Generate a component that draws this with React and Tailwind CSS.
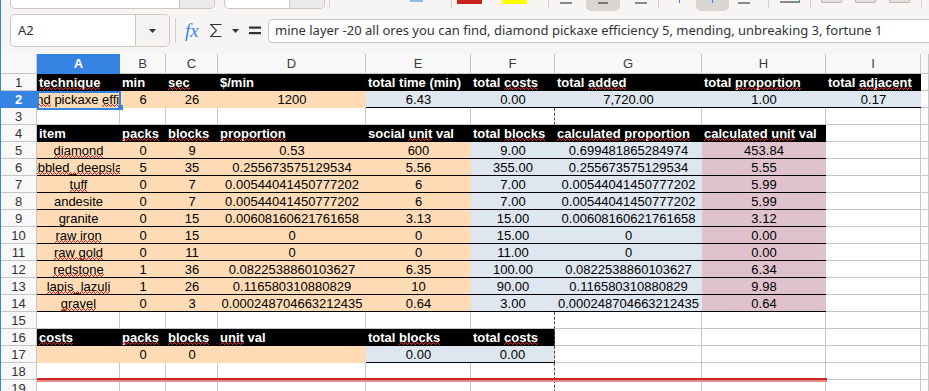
import React from "react";

const GRID = "grid grid-cols-[36px_83px_46px_52px_148px_105px_84px_147px_124px_95px_1fr]";

const K = (t, x = {}) => ({ t, bg: "k", ...x });
const O = (t, x = {}) => ({ t, bg: "o", ...x });
const B = (t, x = {}) => ({ t, bg: "b", ...x });
const P = (t, x = {}) => ({ t, bg: "p", ...x });
const W = (x = {}) => ({ t: "", ...x });
const bb = { bb: true };
const blank = () => [W(), W(), W(), W(), W(), W({ dash: true }), W(), W(), W(), W()];

const A2 = "mine layer -20 all ores you can find, {diamond} pickaxe {efficiency} 5, mending, unbreaking 3, fortune 1";

const items = [
  ["{diamond}", "0", "9", "0.53", "600", "9.00", "0.699481865284974", "453.84"],
  ["{cobbled_deepslate}", "5", "35", "0.255673575129534", "5.56", "355.00", "0.255673575129534", "5.55"],
  ["{tuff}", "0", "7", "0.00544041450777202", "6", "7.00", "0.00544041450777202", "5.99"],
  ["andesite", "0", "7", "0.00544041450777202", "6", "7.00", "0.00544041450777202", "5.99"],
  ["granite", "0", "15", "0.00608160621761658", "3.13", "15.00", "0.00608160621761658", "3.12"],
  ["{raw iron}", "0", "15", "0", "0", "15.00", "0", "0.00"],
  ["{raw gold}", "0", "11", "0", "0", "11.00", "0", "0.00"],
  ["{redstone}", "1", "36", "0.0822538860103627", "6.35", "100.00", "0.0822538860103627", "6.34"],
  ["{lapis_lazuli}", "1", "26", "0.116580310880829", "10", "90.00", "0.116580310880829", "9.98"],
  ["{gravel}", "0", "3", "0.000248704663212435", "0.64", "3.00", "0.000248704663212435", "0.64"],
];

const rows = [
  [K("{technique}"), K("min"), K("{sec}"), K("$/min"), K("total time (min)"), K("total {costs}"), K("total {added}"), K("total {proportion}"), K("total {adjacent}"), W()],
  [O(A2), O("6"), O("26"), O("1200"), B("6.43", bb), B("0.00", bb), B("7,720.00", bb), B("1.00", bb), B("0.17", bb), W()],
  blank(),
  [K("item"), K("{packs}"), K("{blocks}"), K("{proportion}"), K("social {unit} val"), K("total {blocks}"), K("{calculated} {proportion}"), K("{calculated} {unit} val"), W(), W()],
  ...items.map((r) => [O(r[0], bb), O(r[1], bb), O(r[2], bb), O(r[3], bb), O(r[4], bb), B(r[5], bb), B(r[6], bb), P(r[7], bb), W(), W()]),
  blank(),
  [K("{costs}"), K("{packs}"), K("{blocks}"), K("{unit} val"), K("total {blocks}"), K("total {costs}", { dash: true }), W(), W(), W(), W()],
  [O(""), O("0"), O("0"), O(""), B("0.00", bb), B("0.00", { bb: true, dash: true }), W(), W(), W(), W()],
  blank(),
  blank(),
];

// spell-check squiggle under a word (stacked in one grid cell, no positioning)
function Squiggle({ children }) {
  return (
    <span className="inline-grid">
      <span className="[grid-area:1/1]">{children}</span>
      <svg className="[grid-area:1/1] self-end mb-[1px] w-0 min-w-full h-[3px]" shapeRendering="crispEdges">
        <rect width="100%" height="3" fill="url(#sq)" />
      </svg>
    </span>
  );
}

function Txt({ s }) {
  return s.split(/(\{[^}]*\})/).map((p, i) =>
    p.startsWith("{") ? <Squiggle key={i}>{p.slice(1, -1)}</Squiggle> : p
  );
}

function Cell({ c }) {
  const bg =
    c.bg === "k" ? "bg-black text-white font-bold" :
    c.bg === "o" ? "bg-[#ffdbb6]" :
    c.bg === "b" ? "bg-[#dee6ef]" :
    c.bg === "p" ? "bg-[#e0c2cd]" : "bg-white";
  const right = c.dash
    ? "border-r border-r-[#4d4d4d] [border-right-style:dashed]"
    : c.bg ? "" : "border-r border-r-[#c6c6c6]";
  const bottom = c.bb ? "border-b border-b-black" : c.bg ? "" : "border-b border-b-[#c6c6c6]";
  const al = c.bg === "k" ? "justify-start pl-[2px]" : "justify-center";
  return (
    <div className={`flex h-[17px] overflow-hidden whitespace-nowrap leading-[17px] ${al} ${bg} ${right} ${bottom}`}>
      <span className="shrink-0"><Txt s={c.t} /></span>
    </div>
  );
}

const Sep = ({ ml, h = "h-[8px]" }) => <div className={`shrink-0 w-px ${h} bg-[#d5d0cc] ${ml}`} />;
const Dash = ({ ml }) => <div className={`shrink-0 w-[12px] h-[2px] mt-[2px] bg-[#8a8a8a] ${ml}`} />;
const Tri = ({ ml = "" }) => (
  <svg className={`shrink-0 ${ml}`} width="7" height="4" viewBox="0 0 7 4"><path d="M0 0h7L3.5 4z" fill="#2e3436" /></svg>
);

function Toolbar() {
  return (
    <div className="flex items-start h-[11px]">
      <div className="shrink-0 ml-[9px] w-[205px] h-[9px] flex rounded-b-[5px] border border-t-0 border-[#cdc7c2] bg-white overflow-hidden">
        <div className="ml-auto w-[35px] border-l border-[#cdc7c2] bg-[#edebe9]" />
      </div>
      <div className="shrink-0 ml-[9px] w-[101px] h-[9px] flex rounded-b-[5px] border border-t-0 border-[#cdc7c2] bg-white overflow-hidden">
        <div className="ml-auto w-[35px] border-l border-[#cdc7c2] bg-[#edebe9]" />
      </div>
      <Sep ml="ml-[4px]" />
      <div className="shrink-0 ml-[80px] w-[13px] h-[2px] bg-[#8fbbe8]" />
      <Sep ml="ml-[28px]" />
      <div className="shrink-0 ml-[5px] w-[25px] h-[4px] bg-[#c9211e]" />
      <div className="shrink-0 ml-[20px] w-[25px] h-[4px] bg-[#ffff00]" />
      <Sep ml="ml-[21px]" />
      <Dash ml="ml-[11px]" />
      <div className="shrink-0 ml-[14px] w-[34px] h-[11px] rounded-b-[5px] bg-[#d9d5d1] flex justify-center">
        <div className="w-[10px] h-[2px] mt-[2px] bg-[#777]" />
      </div>
      <Dash ml="ml-[15px]" />
      <Sep ml="ml-[11px]" />
      <div className="shrink-0 ml-[20px] w-px h-[3px] bg-[#3584e4]" />
      <div className="shrink-0 ml-[16px] w-[33px] h-[11px] rounded-b-[5px] bg-[#d9d5d1] flex justify-center">
        <div className="w-px h-[3px] bg-[#3584e4]" />
      </div>
      <Dash ml="ml-[9px]" />
      <Sep ml="ml-[18px]" />
      <div className="shrink-0 ml-[11px] w-[20px] h-[2px] mt-[1px] flex bg-[#8a8a8a]">
        <div className="ml-auto w-px h-[3px] -mt-[1px] bg-[#3584e4]" />
      </div>
      <Sep ml="ml-[10px]" />
      <div className="shrink-0 ml-[10px] w-[21px] h-[3px] rounded-b-[2px] border border-t-0 border-[#b8b4b0] bg-[#e4e1de]" />
      <div className="shrink-0 ml-[13px] w-[21px] h-[3px] rounded-b-[2px] border border-t-0 border-[#b8b4b0] bg-[#e4e1de]" />
      <div className="shrink-0 ml-[13px] w-[21px] h-[3px] rounded-b-[2px] border border-t-0 border-[#b8b4b0] bg-[#e4e1de]" />
      <Sep ml="ml-[11px]" />
    </div>
  );
}

function FormulaBar() {
  return (
    <div className="flex items-center h-[33px] mt-[3px] text-[13px] text-[#2e3436] font-['Noto_Sans',sans-serif] overflow-hidden">
      <div className="shrink-0 ml-[9px] w-[160px] h-[33px] flex rounded-[5px] border border-[#cdc7c2] bg-white overflow-hidden">
        <div className="flex-1 flex items-center pl-[7px]">A2</div>
        <div className="w-[34px] border-l border-[#cdc7c2] bg-[#f4f3f2] flex items-center justify-center">
          <Tri />
        </div>
      </div>
      <Sep ml="ml-[5px]" h="h-[25px]" />
      <div className="shrink-0 ml-[9px] w-[15px] text-[19px] leading-none italic text-[#3584e4] font-['Liberation_Serif',serif]">fx</div>
      <svg className="shrink-0 ml-[9px]" width="14" height="15" viewBox="0 0 14 15">
        <path d="M12.5 1.5H1.8l5.6 6L1.8 13.5h10.7" fill="none" stroke="#2e3436" strokeWidth="1.1" />
      </svg>
      <Tri ml="ml-[9px]" />
      <svg className="shrink-0 ml-[10px]" width="12" height="9" viewBox="0 0 12 9">
        <rect x="0" y="0.5" width="12" height="2.2" fill="#2e3436" />
        <rect x="0" y="6" width="12" height="2.2" fill="#2e3436" />
      </svg>
      <div className="shrink-0 ml-[7px] w-[700px] h-[24px] flex items-center pl-[6px] rounded-[4px] border border-[#cdc7c2] bg-white whitespace-nowrap">
        mine layer -20 all ores you can find, diamond pickaxe efficiency 5, mending, unbreaking 3, fortune 1
      </div>
    </div>
  );
}

export default function App() {
  const letters = ["A", "B", "C", "D", "E", "F", "G", "H", "I", ""];
  return (
    <div className="w-[929px] h-[391px] overflow-hidden bg-[#f6f5f4] border-l border-[#3584e4]">
      <svg width="0" height="0" className="absolute">
        <defs>
          <pattern id="sq" width="4" height="3" patternUnits="userSpaceOnUse">
            <rect x="0" y="2" width="1" height="1" fill="#ee1c24" />
            <rect x="1" y="1" width="1" height="1" fill="#ee1c24" />
            <rect x="2" y="0" width="1" height="1" fill="#ee1c24" />
            <rect x="3" y="1" width="1" height="1" fill="#ee1c24" />
          </pattern>
        </defs>
      </svg>
      <Toolbar />
      <FormulaBar />
      <div className="h-[7px]" />
      <div className="font-['Liberation_Sans',Arial,sans-serif] text-[13px] text-black">
        <div className={`${GRID} h-[20px] bg-[#f8f8f8] text-[#3d3d3d] leading-[19px]`}>
          <div className="border-r border-b border-[#c6c6c6]" />
          {letters.map((l, i) => (
            <div
              key={i}
              className={i === 0 ? "text-center bg-[#3584e4] text-white font-bold border-b border-[#3584e4]" : "text-center border-r border-b border-[#c6c6c6]"}
            >
              {l}
            </div>
          ))}
        </div>
        {rows.map((r, ri) => (
          <div key={ri} className={`${GRID} relative`}>
            <div
              className={
                ri === 1
                  ? "h-[17px] leading-[17px] text-center bg-[#3584e4] text-white font-bold border-r border-[#3584e4]"
                  : "h-[17px] leading-[17px] text-center bg-[#f8f8f8] text-[#333] border-r border-b border-[#c6c6c6]"
              }
            >
              {ri + 1}
            </div>
            {r.map((c, ci) => (
              <Cell key={ci} c={c} />
            ))}
            {ri === 1 && (
              <div className="absolute z-10 left-[36px] top-0 w-[84px] h-[19px] border-2 border-[#3584e4]">
                <div className="absolute right-[-4px] bottom-[-2px] w-[5px] h-[5px] bg-[#3584e4]" />
              </div>
            )}
            {ri === 17 && (
              <div className="absolute z-10 left-[36px] top-[15px] w-[790px] h-[4px] border-t-2 border-[#cf2424] bg-[#e38a8a]" />
            )}
          </div>
        ))}
      </div>
    </div>
  );
}
